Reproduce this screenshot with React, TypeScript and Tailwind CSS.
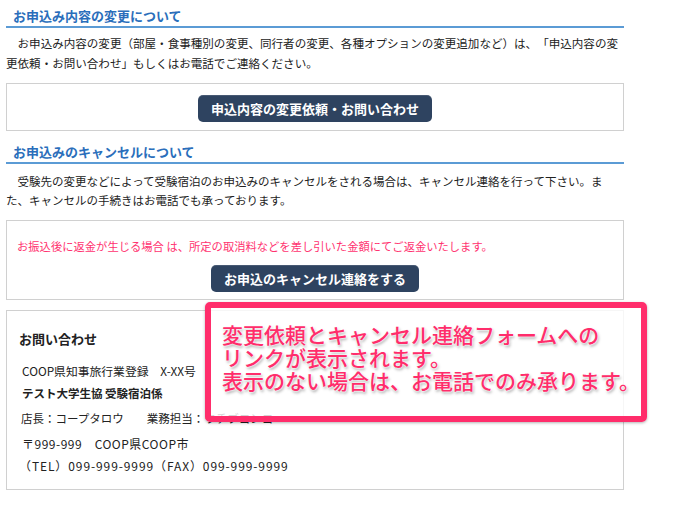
const font = "font-['Noto_Sans_CJK_JP',sans-serif]";
const sp = "\u3000";

function SectionHeading({ children }: { children: React.ReactNode }) {
  return (
    <h2 className="border-b-2 border-[#5b9bd5] pl-[7px] pb-px text-[13px] font-bold leading-[18px] text-[#2a6ebb]">
      {children}
    </h2>
  );
}

function DarkButton({ children }: { children: React.ReactNode }) {
  return (
    <button className="h-[27px] rounded-[5px] bg-[#2e4360] px-[13px] text-[13px] font-bold leading-[27px] text-white shadow-[inset_0_1px_0_rgba(255,255,255,0.12)]">
      {children}
    </button>
  );
}

export default function App() {
  return (
    <div
      className={`relative h-[506px] w-[675px] overflow-hidden bg-white ${font} text-[#222] [text-spacing-trim:space-all]`}
    >
      <div className="ml-[6px] w-[618px] pt-[7px]">
        {/* 申込内容の変更 */}
        <SectionHeading>お申込み内容の変更について</SectionHeading>
        <p className="mt-[5px] whitespace-nowrap text-[11.55px] leading-[20px]">
          {sp}お申込み内容の変更（部屋・食事種別の変更、同行者の変更、各種オプションの変更追加など）は、「申込内容の変
          <br />
          更依頼・お問い合わせ」もしくはお電話でご連絡ください。
        </p>
        <div className="mt-[10px] flex h-[48px] justify-center border border-[#d0d0d0] pt-[11px]">
          <DarkButton>申込内容の変更依頼・お問い合わせ</DarkButton>
        </div>

        {/* キャンセル */}
        <div className="mt-[12px]">
          <SectionHeading>お申込みのキャンセルについて</SectionHeading>
        </div>
        <p className="mt-[8px] whitespace-nowrap text-[11.5px] leading-[19px]">
          {sp}受験先の変更などによって受験宿泊のお申込みのキャンセルをされる場合は、キャンセル連絡を行って下さい。ま
          <br />
          た、キャンセルの手続きはお電話でも承っております。
        </p>
        <div className="mt-[10px] flex h-[80px] flex-col items-center border border-[#d0d0d0] pt-[15px]">
          <p className="self-start pl-[10px] text-[11.3px] leading-[20px] text-[#ff3370]">
            お振込後に返金が生じる場合 は、所定の取消料などを差し引いた金額にてご返金いたします。
          </p>
          <div className="mt-[9px]">
            <DarkButton>お申込のキャンセル連絡をする</DarkButton>
          </div>
        </div>

        {/* お問い合わせ */}
        <div className="mt-[10px] h-[180px] border border-[#d0d0d0] pl-[12px] pt-[18px] text-[11.5px]">
          <p className="text-[13px] font-bold leading-[20px]">お問い合わせ</p>
          <div className="mt-[11px] pl-[3px] leading-[22px]">
            <p className="text-[11.8px]">COOP県知事旅行業登録{sp}X-XX号</p>
            <p className="font-bold">テスト大学生協 受験宿泊係</p>
          </div>
          <p className="mt-[3px] pl-[2px] leading-[22px]">
            店長：コープタロウ{sp}{sp}業務担当：ウチブコンコ
          </p>
          <div className="mt-[4px] pl-[3px] text-[12px] leading-[22px] tracking-[0.5px]">
            <p>〒999-999{sp}COOP県COOP市</p>
            <p className="-ml-[3px] tracking-[0.9px]">（TEL）099-999-9999（FAX）099-999-9999</p>
          </div>
        </div>
      </div>

      {/* 注釈 */}
      <div className="absolute left-[205px] top-[302px] h-[120px] w-[442px] rounded-[5px] border-[6px] border-[#ff2d6b] bg-white/80 pl-[11px] pt-[15px] shadow-[0_1px_3px_rgba(0,0,0,0.3)]">
        <p className="text-[21px] font-medium leading-[23px] text-[#ff2d6b] [text-shadow:0_0_2px_#fff,0_0_2px_#fff,1px_2px_3px_rgba(0,0,0,0.35)]">
          変更依頼とキャンセル連絡フォームへの
          <br />
          リンクが表示されます。
          <br />
          表示のない場合は、お電話でのみ承ります。
        </p>
      </div>
    </div>
  );
}
